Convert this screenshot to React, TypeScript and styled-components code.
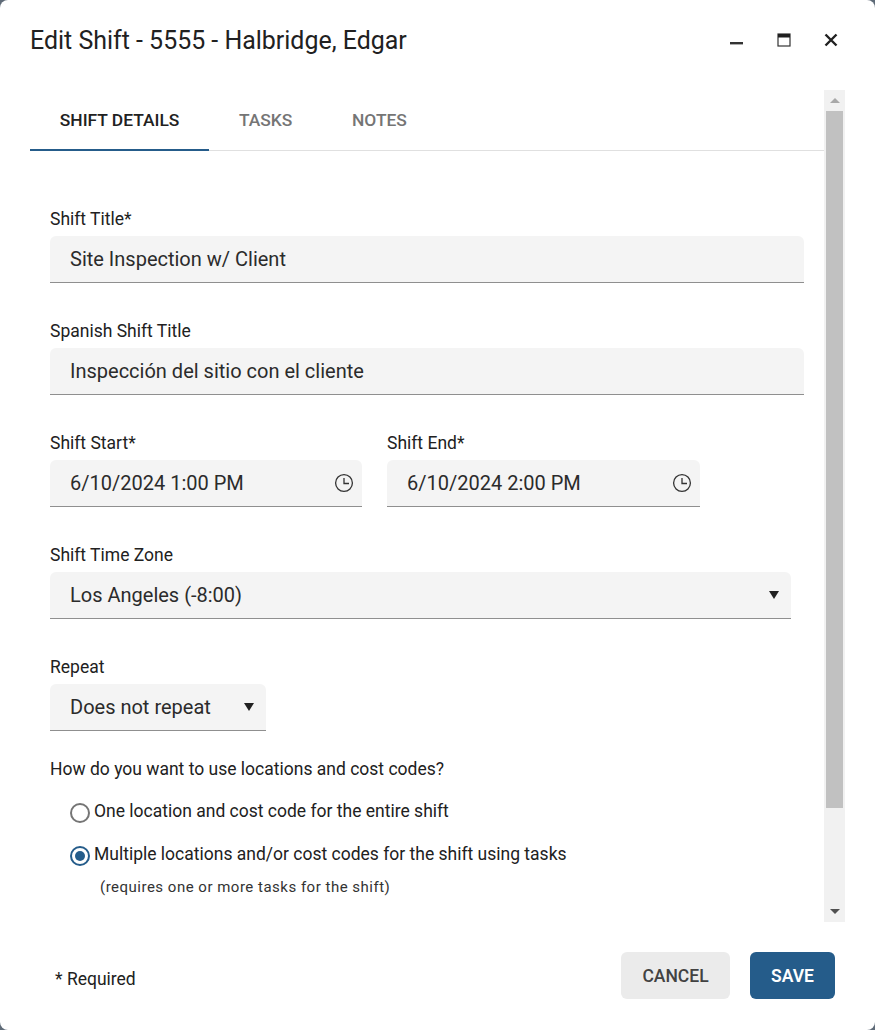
import styled, { createGlobalStyle } from "styled-components";

const GlobalStyle = createGlobalStyle`
  html, body {
    margin: 0;
    padding: 0;
    background: #5f6b78;
  }
  * {
    box-sizing: border-box;
  }
`;

const Dialog = styled.div`
  width: 875px;
  height: 1030px;
  background: #fff;
  border-radius: 8px;
  overflow: hidden;
  font-family: Roboto, "Liberation Sans", sans-serif;
  color: #212121;
  display: flex;
  flex-direction: column;
`;

const Header = styled.header`
  height: 90px;
  padding: 0 30px 10px;
  display: flex;
  align-items: center;
  justify-content: space-between;
`;

const Title = styled.h1`
  margin: 0;
  font-size: 24.95px;
  font-weight: 400;
`;

const WindowButtons = styled.div`
  display: flex;
  align-items: center;
  gap: 31px;
  padding-right: 6px;
`;

const IconButton = styled.button`
  width: 16px;
  height: 16px;
  padding: 0;
  border: 0;
  background: none;
  display: block;
  svg {
    display: block;
  }
`;

const Body = styled.div`
  margin-left: 30px;
  width: 815px;
  height: 832px;
  display: flex;
`;

const Scroller = styled.div`
  flex: 1;
  min-width: 0;
`;

const Tabs = styled.div`
  height: 61px;
  display: flex;
  border-bottom: 1px solid #e0e0e0;
`;

const Tab = styled.div<{ $active?: boolean }>`
  height: 61px;
  padding: 0 29.8px;
  display: flex;
  align-items: center;
  font-size: 17.4px;
  font-weight: 500;
  color: ${(p) => (p.$active ? "#212121" : "#757575")};
  border-bottom: 2px solid ${(p) => (p.$active ? "#255c8a" : "transparent")};
  margin-bottom: -1px;
`;

const Form = styled.div`
  padding: 57px 0 0 20px;
  display: flex;
  flex-direction: column;
  gap: 37px;
`;

const FieldRow = styled.div`
  display: flex;
  gap: 25px;
`;

const Field = styled.div<{ $width: number }>`
  width: ${(p) => p.$width}px;
`;

const Label = styled.div`
  font-size: 17.5px;
  line-height: 22px;
  height: 22px;
  margin-bottom: 6px;
`;

const InputBox = styled.div`
  height: 47px;
  padding: 0 20px;
  background: #f4f4f4;
  border-radius: 6px 6px 0 0;
  border-bottom: 1px solid #8f8f8f;
  display: flex;
  align-items: center;
  justify-content: space-between;
  font-size: 20px;
  color: #2b2b2b;
  white-space: nowrap;
`;

const ClockIcon = styled.svg`
  width: 20px;
  height: 20px;
  margin-right: -12px;
`;

const Caret = styled.span`
  width: 0;
  height: 0;
  border-left: 5.5px solid transparent;
  border-right: 5.5px solid transparent;
  border-top: 8px solid #212121;
  margin-right: -8px;
`;

const Question = styled.div`
  font-size: 17.5px;
  line-height: 22px;
  margin-top: -10px;
`;

const RadioList = styled.div`
  margin-top: -17px;
  padding-left: 20px;
  display: flex;
  flex-direction: column;
  gap: 21px;
`;

const RadioRow = styled.div`
  height: 22px;
  display: flex;
  align-items: center;
  gap: 4px;
  font-size: 17.5px;
  line-height: 22px;
`;

const RadioDot = styled.span<{ $checked?: boolean }>`
  width: 20px;
  height: 20px;
  border-radius: 50%;
  border: 2px solid ${(p) => (p.$checked ? "#255c8a" : "#757575")};
  display: flex;
  align-items: center;
  justify-content: center;
  margin-top: 3px;
  &::after {
    content: "";
    display: ${(p) => (p.$checked ? "block" : "none")};
    width: 10px;
    height: 10px;
    border-radius: 50%;
    background: #255c8a;
  }
`;

const Hint = styled.div`
  margin: -9px 0 0 30px;
  font-size: 15px;
  letter-spacing: 0.5px;
  line-height: 20px;
  color: #333;
`;

const Scrollbar = styled.div`
  width: 21px;
  flex: none;
  margin-left: -1px;
  background: #f1f1f1;
  display: flex;
  flex-direction: column;
  align-items: center;
`;

const ScrollArrow = styled.div<{ $up?: boolean }>`
  height: 21px;
  flex: none;
  display: flex;
  align-items: center;
  justify-content: center;
  &::after {
    content: "";
    border-left: 5px solid transparent;
    border-right: 5px solid transparent;
    ${(p) =>
      p.$up ? "border-bottom: 5px solid #a8a8a8;" : "border-top: 5px solid #505050;"}
  }
`;

const ScrollThumb = styled.div`
  width: 17px;
  height: 697px;
  flex: none;
  background: #c1c1c1;
`;

const ScrollTrack = styled.div`
  flex: 1;
`;

const Footer = styled.footer`
  flex: 1;
  padding: 30px 40px 0 55px;
  display: flex;
  justify-content: space-between;
  align-items: flex-start;
`;

const Required = styled.div`
  font-size: 17.5px;
  line-height: 22px;
  margin-top: 16px;
`;

const Actions = styled.div`
  display: flex;
  gap: 20px;
`;

const Button = styled.button<{ $primary?: boolean }>`
  height: 47px;
  width: ${(p) => (p.$primary ? "85px" : "109px")};
  border: 0;
  border-radius: 6px;
  font-family: inherit;
  font-size: 17.5px;
  font-weight: ${(p) => (p.$primary ? 600 : 500)};
  background: ${(p) => (p.$primary ? "#255c8a" : "#ebebeb")};
  color: ${(p) => (p.$primary ? "#fff" : "#424242")};
`;

function Clock() {
  return (
    <ClockIcon viewBox="0 0 20 20" fill="none" stroke="#333" strokeWidth="1.3">
      <circle cx="10" cy="10" r="8.4" />
      <path d="M10 5V10.5H15" />
    </ClockIcon>
  );
}

function App() {
  return (
    <>
      <GlobalStyle />
      <Dialog>
        <Header>
          <Title>Edit Shift - 5555 - Halbridge, Edgar</Title>
          <WindowButtons>
            <IconButton>
              <svg width="16" height="16" viewBox="0 0 16 16">
                <rect x="1" y="10" width="13" height="2.4" fill="#333" />
              </svg>
            </IconButton>
            <IconButton>
              <svg width="16" height="16" viewBox="0 0 16 16">
                <rect x="2" y="2" width="12" height="12" fill="#fff" stroke="#333" strokeWidth="1.2" />
                <rect x="2" y="2" width="12" height="3.5" fill="#1f1f1f" />
              </svg>
            </IconButton>
            <IconButton>
              <svg width="16" height="16" viewBox="0 0 16 16">
                <path d="M2.5 2.5L13.5 13.5M13.5 2.5L2.5 13.5" stroke="#212121" strokeWidth="2.4" />
              </svg>
            </IconButton>
          </WindowButtons>
        </Header>
        <Body>
          <Scroller>
            <Tabs>
              <Tab $active>SHIFT DETAILS</Tab>
              <Tab>TASKS</Tab>
              <Tab>NOTES</Tab>
            </Tabs>
            <Form>
              <Field $width={754}>
                <Label>Shift Title*</Label>
                <InputBox>Site Inspection w/ Client</InputBox>
              </Field>
              <Field $width={754}>
                <Label>Spanish Shift Title</Label>
                <InputBox>Inspección del sitio con el cliente</InputBox>
              </Field>
              <FieldRow>
                <Field $width={312}>
                  <Label>Shift Start*</Label>
                  <InputBox>
                    6/10/2024 1:00 PM
                    <Clock />
                  </InputBox>
                </Field>
                <Field $width={313}>
                  <Label>Shift End*</Label>
                  <InputBox>
                    6/10/2024 2:00 PM
                    <Clock />
                  </InputBox>
                </Field>
              </FieldRow>
              <Field $width={741}>
                <Label>Shift Time Zone</Label>
                <InputBox>
                  Los Angeles (-8:00)
                  <Caret />
                </InputBox>
              </Field>
              <Field $width={216}>
                <Label>Repeat</Label>
                <InputBox>
                  Does not repeat
                  <Caret />
                </InputBox>
              </Field>
              <Question>How do you want to use locations and cost codes?</Question>
              <RadioList>
                <RadioRow>
                  <RadioDot />
                  One location and cost code for the entire shift
                </RadioRow>
                <RadioRow>
                  <RadioDot $checked />
                  Multiple locations and/or cost codes for the shift using tasks
                </RadioRow>
                <Hint>(requires one or more tasks for the shift)</Hint>
              </RadioList>
            </Form>
          </Scroller>
          <Scrollbar>
            <ScrollArrow $up />
            <ScrollThumb />
            <ScrollTrack />
            <ScrollArrow />
          </Scrollbar>
        </Body>
        <Footer>
          <Required>* Required</Required>
          <Actions>
            <Button>CANCEL</Button>
            <Button $primary>SAVE</Button>
          </Actions>
        </Footer>
      </Dialog>
    </>
  );
}

export default App;
